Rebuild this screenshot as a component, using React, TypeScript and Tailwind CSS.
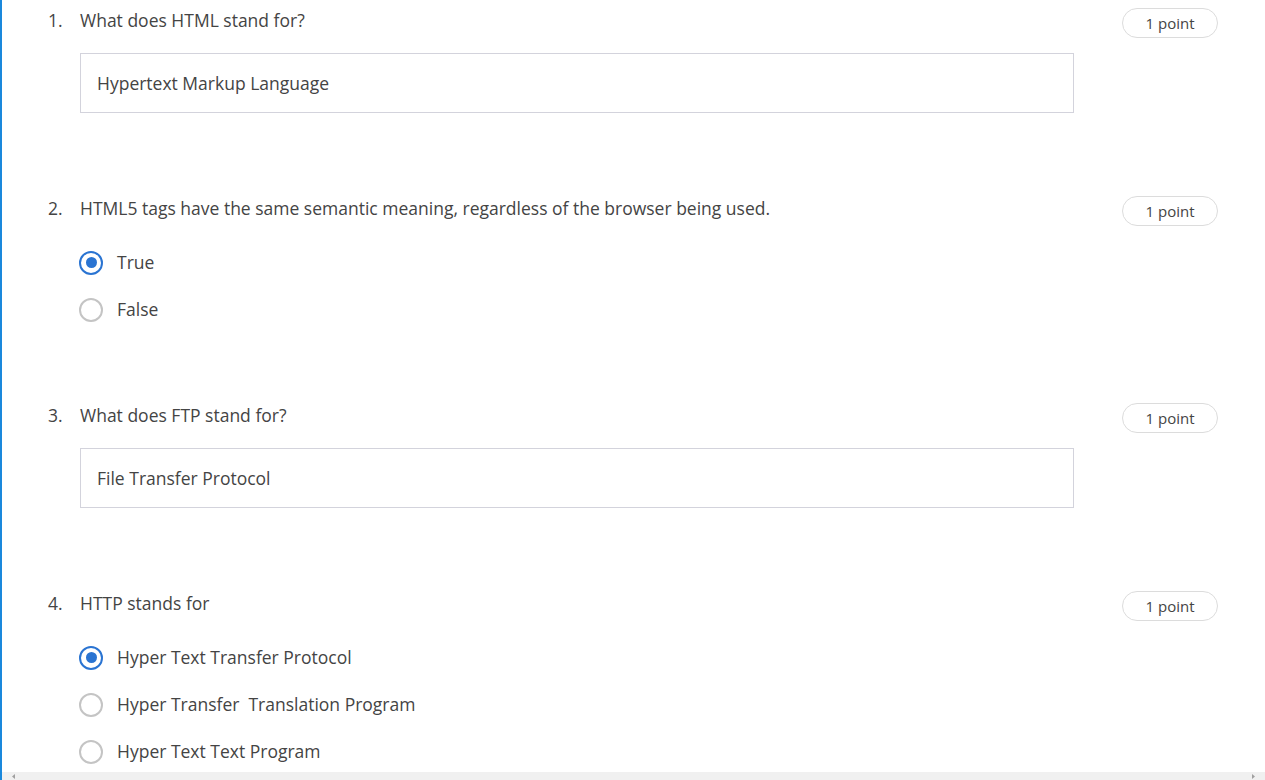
import React from "react";

type Question =
  | { n: number; text: string; kind: "text"; answer: string; mb: string }
  | { n: number; text: string; kind: "radio"; options: string[]; selected: number; mb: string };

const questions: Question[] = [
  { n: 1, text: "What does HTML stand for?", kind: "text", answer: "Hypertext Markup Language", mb: "mb-[83px]" },
  {
    n: 2,
    text: "HTML5 tags have the same semantic meaning, regardless of the browser being used.",
    kind: "radio",
    options: ["True", "False"],
    selected: 0,
    mb: "mb-[70px]",
  },
  { n: 3, text: "What does FTP stand for?", kind: "text", answer: "File Transfer Protocol", mb: "mb-[83px]" },
  {
    n: 4,
    text: "HTTP stands for",
    kind: "radio",
    options: ["Hyper Text Transfer Protocol", "Hyper Transfer\u00a0 Translation Program", "Hyper Text Text Program"],
    selected: 0,
    mb: "mb-[70px]",
  },
];

function Radio({ checked }: { checked: boolean }) {
  if (checked) {
    return (
      <span className="w-6 h-6 rounded-full border-[2.5px] border-[#2a74d2] flex items-center justify-center shrink-0">
        <span className="w-[11px] h-[11px] rounded-full bg-[#2a74d2]" />
      </span>
    );
  }
  return <span className="w-6 h-6 rounded-full border-2 border-[#c4c4c4] shrink-0" />;
}

function QuestionBlock({ q }: { q: Question }) {
  return (
    <div className={q.mb}>
      {/* Header row */}
      <div className="flex items-start justify-between h-[30px]">
        <div className="flex text-[17.5px] leading-6 text-[#444]">
          <span className="w-8">{q.n}.</span>
          <span>{q.text}</span>
        </div>
        <span className="h-[30px] w-[96px] rounded-full border border-[#dcdcdc] flex items-center justify-center text-[15px] text-[#444]">
          1 point
        </span>
      </div>

      {q.kind === "text" ? (
        <div className="ml-8 mt-[15px] w-[994px] h-[60px] border border-[#d3d3dc] flex items-center px-4 text-[17.5px] text-[#444]">
          {q.answer}
        </div>
      ) : (
        <div className="ml-8 mt-[13px]">
          {q.options.map((opt, i) => (
            <div key={opt} className="h-[47px] flex items-center gap-[14px] -ml-[1px] text-[17.5px] text-[#444]">
              <Radio checked={i === q.selected} />
              <span>{opt}</span>
            </div>
          ))}
        </div>
      )}
    </div>
  );
}

export default function App() {
  return (
    <div className="w-[1265px] h-[780px] flex bg-white overflow-hidden" style={{ fontFamily: '"Open Sans", "Noto Sans", sans-serif' }}>
      {/* Left accent bar */}
      <div className="w-[2px] h-full bg-[#1a88dc] shrink-0" />

      <div className="flex-1 flex flex-col">
        <div className="flex-1 overflow-hidden pl-[46px] pr-[47px] pt-2">
          {questions.map((q) => (
            <QuestionBlock key={q.n} q={q} />
          ))}
        </div>

        {/* Horizontal scrollbar */}
        <div className="h-[8px] bg-[#f0f0f0] flex items-center justify-between px-[10px]">
          <svg width="4" height="5" viewBox="0 0 4 5">
            <path d="M3 0 L0 2.5 L3 5 Z" fill="#a0a0a0" />
          </svg>
          <svg width="4" height="5" viewBox="0 0 4 5">
            <path d="M1 0 L4 2.5 L1 5 Z" fill="#a0a0a0" />
          </svg>
        </div>
      </div>
    </div>
  );
}
